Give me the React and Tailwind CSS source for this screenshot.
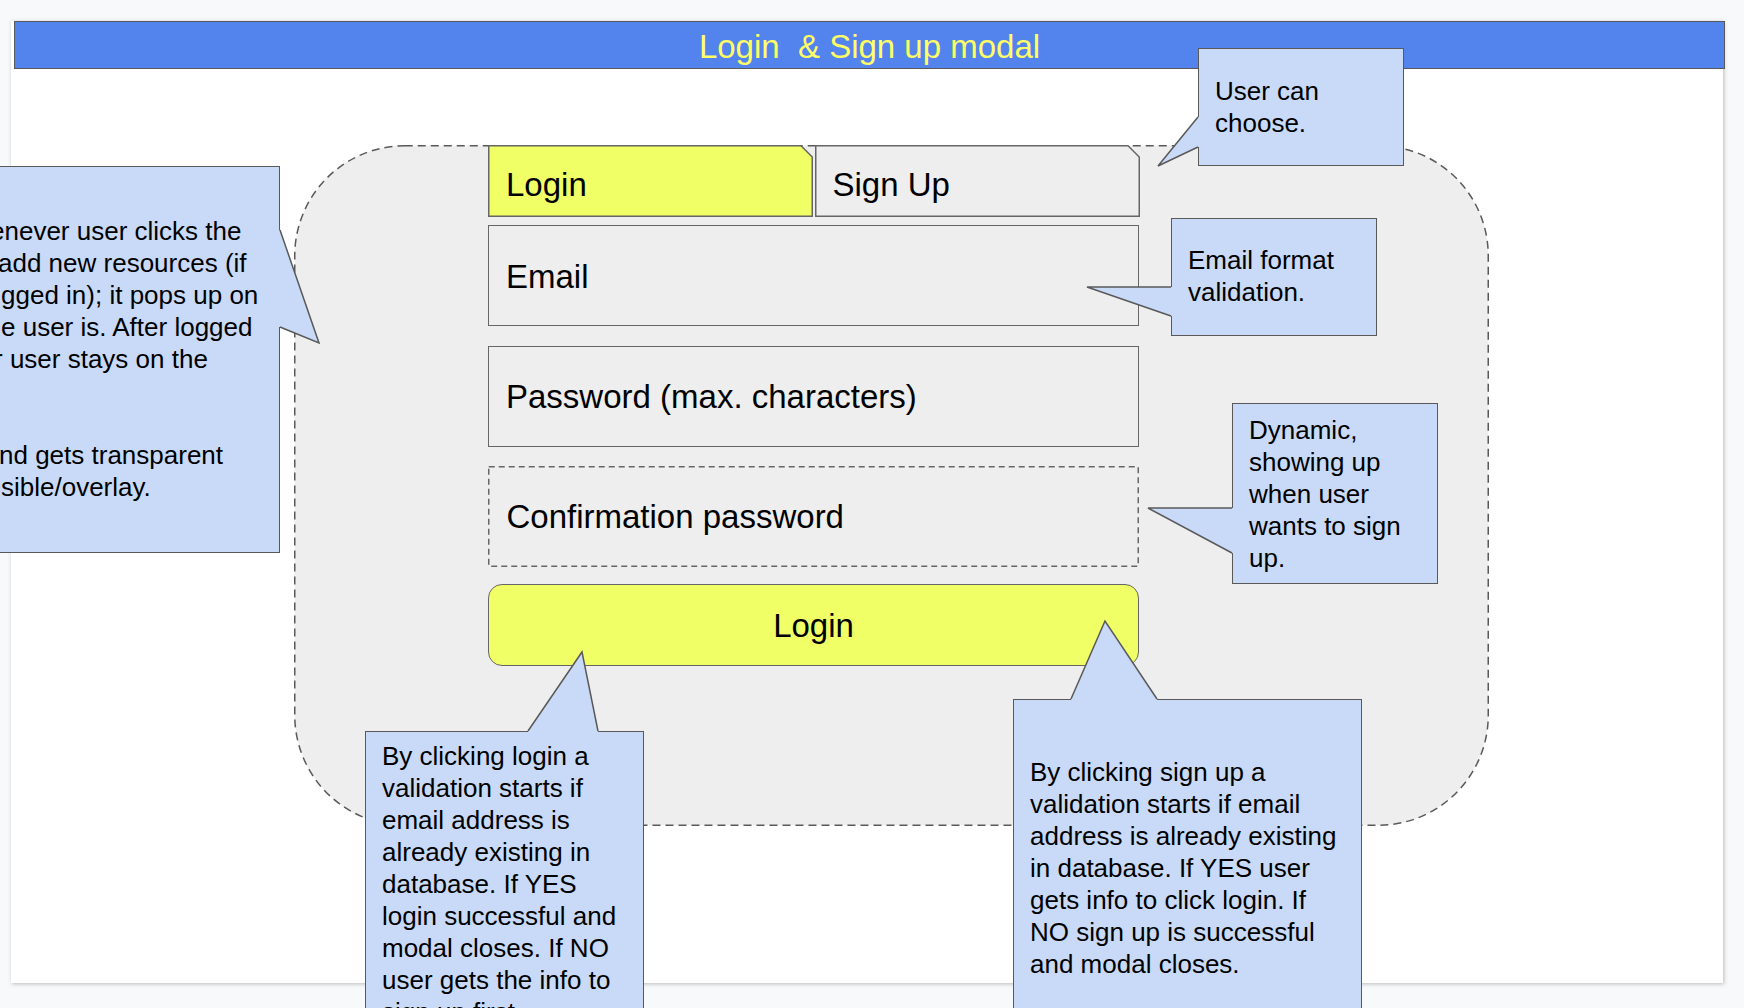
import React from "react";

const FILL = "#c9daf8";
const STROKE = "#595959";

// speech-bubble tail: a = base start, tip, b = base end, inward = direction into the box
const Tail = ({ a, tip, b, inward }) => {
  const pts = [a, tip, b];
  const xs = pts.map((p) => p[0]);
  const ys = pts.map((p) => p[1]);
  const minX = Math.min(...xs) - 6;
  const minY = Math.min(...ys) - 6;
  const w = Math.max(...xs) + 6 - minX;
  const h = Math.max(...ys) + 6 - minY;
  const rel = (p) => `${p[0] - minX},${p[1] - minY}`;
  const [dx, dy] = inward;
  const fillPts = [a, tip, b, [b[0] + dx * 3, b[1] + dy * 3], [a[0] + dx * 3, a[1] + dy * 3]];
  return (
    <svg
      className="absolute overflow-visible"
      style={{ left: minX, top: minY }}
      width={w}
      height={h}
    >
      <polygon points={fillPts.map(rel).join(" ")} fill={FILL} />
      <polyline
        points={pts.map(rel).join(" ")}
        fill="none"
        stroke={STROKE}
        strokeWidth="1.5"
      />
    </svg>
  );
};

const Lines = ({ lines }) => (
  <div className="text-[26px] leading-[32px] text-black whitespace-nowrap">
    {lines.map((l, i) => (
      <div key={i}>{l || "\u00a0"}</div>
    ))}
  </div>
);

const Tab = ({ label, fill }) => (
  <div className="relative w-[325px] h-[72px] flex items-center pl-[18px] pt-[8px]">
    <svg className="absolute inset-0" width="325" height="72">
      <polygon
        points="0.75,0.75 313,0.75 324.25,12 324.25,71.25 0.75,71.25"
        fill={fill}
        stroke="#666666"
        strokeWidth="1.5"
      />
    </svg>
    <span className="relative text-[33px] text-black">{label}</span>
  </div>
);

const App = () => {
  return (
    <div className="w-[1744px] h-[1008px] overflow-hidden bg-[#f8f9fa] pl-[11px] pt-[21px] font-['Liberation_Sans',Arial,sans-serif]">
      <div className="relative w-[1712px] h-[962px] bg-white shadow-[1px_1px_4px_rgba(0,0,0,0.25)]">
        {/* title bar */}
        <div className="ml-[3px] w-[1711px] h-[48px] bg-[#5383ec] border-[1.5px] border-[#595959] flex items-center justify-center pt-[3px]">
          <span className="text-[33px] text-[#ffff66] whitespace-pre">Login  &amp; Sign up modal</span>
        </div>

        {/* modal */}
        <div className="absolute left-[283px] top-[124px] w-[1195px] h-[681px]">
          <svg className="absolute inset-0" width="1195" height="681">
            <rect
              x="0.75"
              y="0.75"
              width="1193.5"
              height="679.5"
              rx="110"
              fill="#eeeeee"
              stroke="#595959"
              strokeWidth="1.5"
              strokeDasharray="8 5"
            />
          </svg>
          <div className="relative ml-[194px] w-[651px] flex flex-col">
            <div className="flex gap-[2px]">
              <Tab label="Login" fill="#f0ff66" />
              <Tab label="Sign Up" fill="#eeeeee" />
            </div>
            <div className="mt-[8px] h-[101px] border-[1.5px] border-[#666666] flex items-center pl-[17px] pt-[2px] text-[33px] text-black">
              Email
            </div>
            <div className="mt-[20px] h-[101px] border-[1.5px] border-[#666666] flex items-center pl-[17px] pt-[1px] text-[33px] text-black">
              Password (max. characters)
            </div>
            <div className="relative mt-[19px] h-[101px] flex items-center pl-[18.5px] pt-[1px] text-[33px] text-black">
              <svg className="absolute inset-0" width="651" height="101">
                <rect
                  x="0.75"
                  y="0.75"
                  width="649.5"
                  height="99.5"
                  fill="none"
                  stroke="#666666"
                  strokeWidth="1.5"
                  strokeDasharray="6 4"
                />
              </svg>
              <span className="relative">Confirmation password</span>
            </div>
            <div className="mt-[17px] h-[82px] rounded-[14px] border-[1.5px] border-[#666666] bg-[#f0ff66] flex items-center justify-center pt-[1px] text-[33px] text-black">
              Login
            </div>
          </div>
        </div>

        {/* callout: tabs */}
        <div className="absolute left-[1187px] top-[27px] w-[206px] h-[118px] bg-[#c9daf8] border-[1.5px] border-[#595959] pl-[16px] pt-[26px]">
          <Lines lines={["User can", "choose."]} />
        </div>
        <Tail a={[1187, 96]} tip={[1147, 145]} b={[1187, 126]} inward={[1, 0]} />

        {/* callout: left, cut by the window */}
        <div className="absolute left-[-31px] top-[145px] w-[300px] h-[387px] bg-[#c9daf8] border-[1.5px] border-[#595959] pl-[18px] pt-[48px]">
          <div className="text-[26px] leading-[32px] text-black whitespace-nowrap">
            <div className="ml-[-9px]">enever user clicks the</div>
            <div className="ml-[-1px]">add new resources (if</div>
            <div className="ml-[2px]">gged in); it pops up on</div>
            <div className="ml-[2px]">e user is. After logged</div>
            <div className="ml-[-5px]">r user stays on the</div>
            <div>{"\u00a0"}</div>
            <div>{"\u00a0"}</div>
            <div>nd gets transparent</div>
            <div className="ml-[2px]">sible/overlay.</div>
          </div>
        </div>
        <Tail a={[269, 209]} tip={[308, 322]} b={[269, 306]} inward={[-1, 0]} />

        {/* callout: email */}
        <div className="absolute left-[1160px] top-[197px] w-[206px] h-[118px] bg-[#c9daf8] border-[1.5px] border-[#595959] pl-[16px] pt-[25px]">
          <Lines lines={["Email format", "validation."]} />
        </div>
        <Tail a={[1160, 266]} tip={[1076, 266]} b={[1160, 295]} inward={[1, 0]} />

        {/* callout: confirmation */}
        <div className="absolute left-[1221px] top-[382px] w-[206px] h-[181px] bg-[#c9daf8] border-[1.5px] border-[#595959] pl-[16px] pt-[10px]">
          <Lines lines={["Dynamic,", "showing up", "when user", "wants to sign", "up."]} />
        </div>
        <Tail a={[1221, 487]} tip={[1137, 487]} b={[1221, 532]} inward={[1, 0]} />

        {/* callout: login button */}
        <div className="absolute left-[354px] top-[710px] w-[279px] h-[320px] bg-[#c9daf8] border-[1.5px] border-[#595959] pl-[16px] pt-[8px]">
          <Lines
            lines={[
              "By clicking login a",
              "validation starts if",
              "email address is",
              "already existing in",
              "database. If YES",
              "login successful and",
              "modal closes. If NO",
              "user gets the info to",
              "sign up first.",
            ]}
          />
        </div>
        <Tail a={[517, 710]} tip={[571, 631]} b={[587, 710]} inward={[0, 1]} />

        {/* callout: sign up */}
        <div className="absolute left-[1002px] top-[678px] w-[349px] h-[340px] bg-[#c9daf8] border-[1.5px] border-[#595959] pl-[16px] pt-[56px]">
          <Lines
            lines={[
              "By clicking sign up a",
              "validation starts if email",
              "address is already existing",
              "in database. If YES user",
              "gets info to click login. If",
              "NO sign up is successful",
              "and modal closes.",
            ]}
          />
        </div>
        <Tail a={[1060, 678]} tip={[1094, 600]} b={[1146, 678]} inward={[0, 1]} />
      </div>
    </div>
  );
};

export default App;
